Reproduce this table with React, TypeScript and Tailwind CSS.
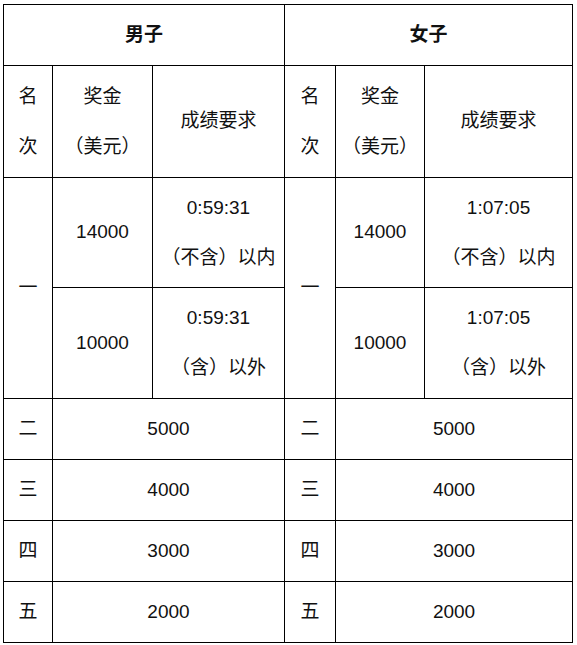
const font = { fontFamily: '"Liberation Sans", "Noto Sans CJK SC", sans-serif' };

const Two = ({ a, b }: { a: string; b: string }) => (
  <div className="leading-[50px]">
    <div>{a}</div>
    <div>{b}</div>
  </div>
);

const cell = "border border-black text-center align-middle p-0";

const lower = [
  { rank: "二", prize: "5000" },
  { rank: "三", prize: "4000" },
  { rank: "四", prize: "3000" },
  { rank: "五", prize: "2000" },
];

export default function App() {
  return (
    <div className="bg-white w-[577px] h-[645px] pt-[4px] pl-[3px] text-[19px] text-[#111]" style={font}>
      <table className="border-collapse table-fixed w-[569px]">
        <colgroup>
          <col className="w-[49px]" />
          <col className="w-[100px]" />
          <col className="w-[132px]" />
          <col className="w-[51px]" />
          <col className="w-[89px]" />
          <col className="w-[148px]" />
        </colgroup>
        <tbody>
          <tr>
            <td colSpan={3} className={`${cell} h-[61px] font-bold`}>男子</td>
            <td colSpan={3} className={`${cell} h-[61px] font-bold`}>女子</td>
          </tr>
          <tr>
            <td className={`${cell} h-[112px]`}><Two a="名" b="次" /></td>
            <td className={cell}><Two a="奖金" b="（美元）" /></td>
            <td className={cell}>成绩要求</td>
            <td className={cell}><Two a="名" b="次" /></td>
            <td className={cell}><Two a="奖金" b="（美元）" /></td>
            <td className={cell}>成绩要求</td>
          </tr>
          <tr>
            <td rowSpan={2} className={cell}>一</td>
            <td className={`${cell} h-[110px]`}>14000</td>
            <td className={cell}><Two a="0:59:31" b="（不含）以内" /></td>
            <td rowSpan={2} className={cell}>一</td>
            <td className={cell}>14000</td>
            <td className={cell}><Two a="1:07:05" b="（不含）以内" /></td>
          </tr>
          <tr>
            <td className={`${cell} h-[111px]`}>10000</td>
            <td className={cell}><Two a="0:59:31" b="（含）以外" /></td>
            <td className={cell}>10000</td>
            <td className={cell}><Two a="1:07:05" b="（含）以外" /></td>
          </tr>
          {lower.map((r) => (
            <tr key={r.rank}>
              <td className={`${cell} h-[61px]`}>{r.rank}</td>
              <td colSpan={2} className={cell}>{r.prize}</td>
              <td className={cell}>{r.rank}</td>
              <td colSpan={2} className={cell}>{r.prize}</td>
            </tr>
          ))}
        </tbody>
      </table>
    </div>
  );
}
